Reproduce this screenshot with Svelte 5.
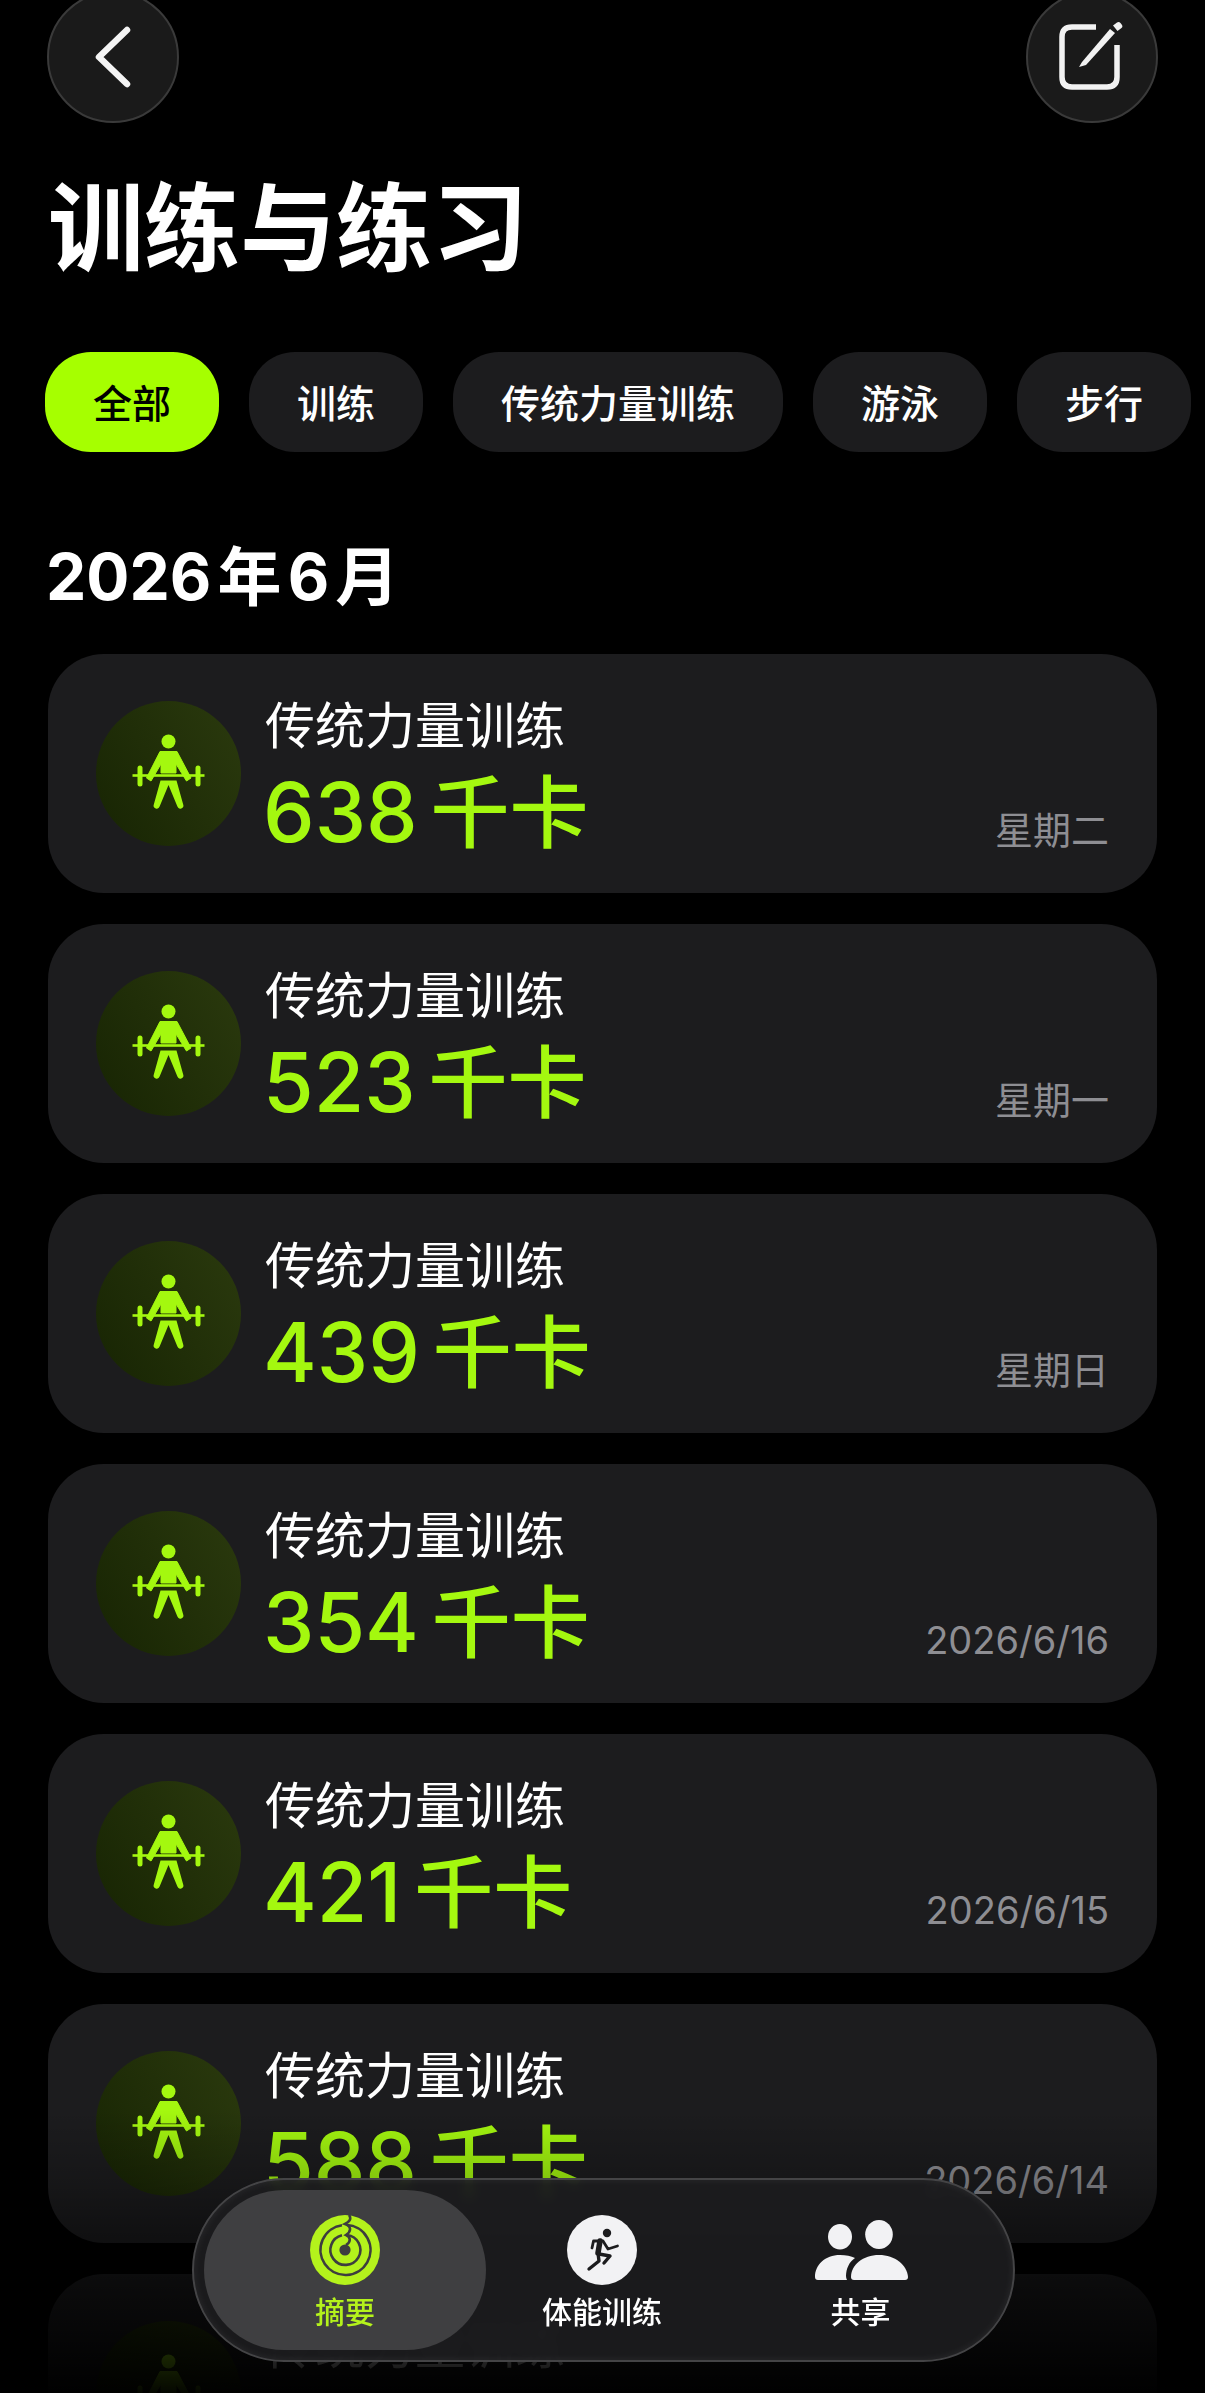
<script>
  const filters = ['全部', '训练', '传统力量训练', '游泳', '步行'];
  const workouts = [
    { kcal: 638, date: '星期二' },
    { kcal: 523, date: '星期一' },
    { kcal: 439, date: '星期日' },
    { kcal: 354, date: '2026/6/16' },
    { kcal: 421, date: '2026/6/15' },
    { kcal: 588, date: '2026/6/14' },
    { kcal: 612, date: '2026/6/13' }
  ];
</script>

<div class="page">
  <header class="top">
    <button class="round" aria-label="返回">
      <svg width="44" height="64" viewBox="0 0 44 64"><path d="M36 5 L8 32 L36 59" fill="none" stroke="#f4f4f4" stroke-width="6.5" stroke-linecap="round" stroke-linejoin="round"/></svg>
    </button>
    <button class="round" aria-label="新建">
      <svg width="70" height="70" viewBox="0 0 70 70">
        <path d="M39 5 H15 Q5 5 5 15 V55 Q5 65 15 65 H50 Q60 65 60 55 V23" fill="none" stroke="#f2f2f2" stroke-width="5.5"/>
        <path d="M25 40 L53 7 L58 11 L29 43 L22 45 Z" fill="#f2f2f2"/>
        <path d="M56 3.5 L60 0.5 Q62 -0.5 63.5 1 L65 3 Q66 5 64.5 6 L60.5 9 Z" fill="#f2f2f2"/>
      </svg>
    </button>
  </header>

  <h1>训练与练习</h1>

  <nav class="chips">
    {#each filters as f, i}
      <span class="chip" class:on={i === 0}>{f}</span>
    {/each}
  </nav>

  <h2>2026 年 6 月</h2>

  <section class="list">
    {#each workouts as w}
      <article class="card">
        <div class="badge">
          <svg width="145" height="145" viewBox="0 0 145 145">
            <g fill="#a4f80f">
              <circle cx="72.5" cy="40.5" r="7"/>
              <path d="M64 50.5 H81 L95 77 L90.5 80 L80 63 V72 H65 V63 L55 80 L50.5 77 Z" stroke="#a4f80f" stroke-width="1" stroke-linejoin="round"/>
              <rect x="36.5" y="73.2" width="72" height="2.6"/>
              <rect x="41.5" y="64.5" width="5" height="21" rx="2.5"/>
              <rect x="99.5" y="64.5" width="5" height="21" rx="2.5"/>
              <path d="M64.5 79.5 H80.5 L87.2 103.5 A3 3 0 0 1 81.4 105.5 L72.5 84 L63.6 105.5 A3 3 0 0 1 57.8 103.5 Z"/>
            </g>
          </svg>
        </div>
        <div class="info">
          <div class="name">传统力量训练</div>
          <div class="kcal">{w.kcal} <span class="unit">千卡</span></div>
        </div>
        <div class="date">{w.date}</div>
      </article>
    {/each}
  </section>

  <div class="fade"></div>

  <footer class="tabs">
    <div class="tab active">
      <svg width="70" height="70" viewBox="-35 -35 70 70">
        <circle r="35" fill="#b4f21c"/>
        <g fill="none" stroke="#3d3d3f" stroke-width="2.6">
          <path d="M2 -25 A25 25 0 1 1 -3 -24.8"/>
          <path d="M2 -15 A15 15 0 1 1 -3 -14.7"/>
          <path d="M4 -35 C7 -31 4 -28 0 -26 C6 -24 7 -19 1 -15 C6 -13 6 -8 1 -5"/>
        </g>
        <circle r="5.6" fill="#3d3d3f"/>
      </svg>
      <span>摘要</span>
    </div>
    <div class="tab">
      <svg width="70" height="70" viewBox="-35 -35 70 70">
        <circle r="35" fill="#f2f2f4"/>
        <circle cx="5" cy="-17" r="4.2" fill="#1c1c1e"/>
        <g fill="none" stroke="#1c1c1e" stroke-linecap="round" stroke-linejoin="round">
          <path d="M-10 -2 L-8.5 -9 H1 L6 -1 L15.5 -4" stroke-width="2.8"/>
          <path d="M-2 -9 L-4 3" stroke-width="5.5"/>
          <path d="M-4 3 L-3 11 L-13 19" stroke-width="3.4"/>
          <path d="M-3 4 L8 6 L2 13" stroke-width="3.4"/>
        </g>
      </svg>
      <span>体能训练</span>
    </div>
    <div class="tab">
      <svg width="104" height="70" viewBox="270 25 104 70" fill="#f2f2f4">
        <ellipse cx="301" cy="46.7" rx="12" ry="12.8"/>
        <ellipse cx="340" cy="44.5" rx="13.8" ry="14.5"/>
        <path d="M279 90 Q276 90 276 87 C276 75 286 65 301 65 C307 65 312 66 316 68 C310 72 307 79 307 86 Q307 88 308 90 Z"/>
        <path d="M315 90 Q312 90 312 87 C312 75 324 65 340 65 C356 65 368 75 369 87 Q369 90 366 90 Z"/>
      </svg>
      <span>共享</span>
    </div>
  </footer>
</div>

<style>
  :global(body) {
    margin: 0;
    background: #000;
  }

  .page {
    position: relative;
    width: 1205px;
    height: 2393px;
    overflow: hidden;
    background: #000;
    color: #fff;
    font-family: "Liberation Sans", "Noto Sans CJK SC", sans-serif;
  }

  .top {
    display: flex;
    justify-content: space-between;
    padding: 0 47px;
    margin-top: -9px;
  }

  .round {
    display: flex;
    align-items: center;
    justify-content: center;
    width: 132px;
    height: 132px;
    padding: 0;
    border-radius: 50%;
    border: 2px solid #3a3a3a;
    background: #1a1a1a;
    box-sizing: border-box;
  }

  h1 {
    margin: 47px 0 0 48px;
    font-size: 96px;
    line-height: 120px;
    font-weight: 700;
    letter-spacing: 0;
  }

  .chips {
    display: flex;
    gap: 30px;
    margin: 62px 0 0 45px;
    white-space: nowrap;
  }

  .chip {
    display: flex;
    align-items: center;
    justify-content: center;
    height: 100px;
    padding: 0 48px 3px;
    border-radius: 46px;
    background: #1c1c1e;
    box-sizing: border-box;
    font-size: 39px;
    font-weight: 500;
  }

  .chip.on {
    background: #a6ff00;
    color: #000;
  }

  h2 {
    margin: 88px 0 0 46px;
    font-family: Inter, "Noto Sans CJK SC", sans-serif;
    font-size: 64px;
    line-height: 74px;
    font-weight: 700;
    word-spacing: -9px;
  }

  .list {
    display: flex;
    flex-direction: column;
    gap: 31px;
    margin: 40px 48px 0;
  }

  .card {
    display: flex;
    align-items: center;
    flex: none;
    height: 239px;
    padding: 0 48px;
    border-radius: 56px;
    background: #1c1c1e;
    box-sizing: border-box;
  }

  .badge {
    flex: none;
    width: 145px;
    height: 145px;
    border-radius: 50%;
    background: linear-gradient(60deg, #172403, #2b3a0e);
  }

  .badge svg {
    display: block;
  }

  .info {
    flex: 1;
    margin-left: 24px;
    padding-top: 7px;
  }

  .name {
    font-size: 50px;
    line-height: 62px;
    color: #fff;
  }

  .kcal {
    margin: 9px 0 0 -2px;
    font-family: Inter, "Noto Sans CJK SC", sans-serif;
    font-size: 82px;
    line-height: 92px;
    color: #a4f80f;
    font-weight: 500;
    white-space: nowrap;
    word-spacing: -9px;
  }

  .unit {
    font-size: 79px;
    font-weight: 500;
  }

  .date {
    align-self: flex-end;
    margin-bottom: 39px;
    font-family: Inter, "Noto Sans CJK SC", sans-serif;
    font-size: 38px;
    line-height: 48px;
    color: #8e8e93;
  }

  .fade {
    position: absolute;
    left: 0;
    right: 0;
    top: 2110px;
    bottom: 0;
    background: linear-gradient(180deg, rgba(0, 0, 0, 0), rgba(0, 0, 0, 0.2) 25%, rgba(0, 0, 0, 0.6) 60%, rgba(0, 0, 0, 0.97));
  }

  .tabs {
    position: absolute;
    left: 192px;
    top: 2178px;
    width: 823px;
    height: 184px;
    display: grid;
    grid-template-columns: 282px 232px 1fr;
    padding: 10px;
    box-sizing: border-box;
    border-radius: 92px;
    border: 2px solid #444446;
    background: rgba(28, 28, 30, 0.94);
    backdrop-filter: blur(6px);
    box-shadow: inset 0 0 8px rgba(255, 255, 255, 0.07);
  }

  .tab {
    display: flex;
    flex-direction: column;
    align-items: center;
    padding-top: 25px;
    border-radius: 80px;
    font-size: 30px;
    line-height: 40px;
    font-weight: 500;
  }

  .tab svg {
    display: block;
    margin-bottom: 8px;
  }

  .tab.active {
    background: #3f3f41;
    color: #b4f21c;
  }
</style>
